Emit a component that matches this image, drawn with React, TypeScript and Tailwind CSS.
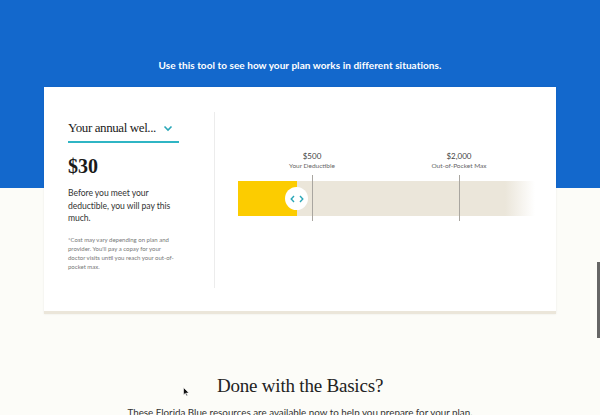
import React from "react";

export default function App() {
  const serif = { fontFamily: '"Liberation Serif", "Times New Roman", serif' };
  return (
    <div
      className="relative w-[600px] h-[415px] overflow-hidden bg-[#fcfcf8]"
      style={{ fontFamily: 'Lato, "Open Sans", sans-serif' }}
    >
      <div className="h-[188px] bg-[#1368cc] flex justify-center pt-[58px]">
        <p className="text-white text-[10px] font-bold tracking-[0.05px]">
          Use this tool to see how your plan works in different situations.
        </p>
      </div>

      <div className="mx-[44px] -mt-[101px] relative bg-white border-b-[3px] border-[#ebe6da] shadow-[0_0_2px_rgba(0,0,0,0.08)]">
        <div className="flex h-[224px] pt-[25px] pb-[23px]">
          <div className="w-[171px] border-r border-[#ececec] pl-[24px] pr-[35px]">
            <div className="flex items-center justify-between h-[29px] border-b-2 border-[#2fb5c4] pr-[6px] mt-[2px]">
              <span
                className="text-[13px] text-[#222] tracking-[-0.4px] whitespace-nowrap"
                style={serif}
              >
                Your annual wel...
              </span>
              <svg width="10" height="7" viewBox="0 0 10 7" className="mt-[1px]">
                <path d="M1.5 1.5 L5 5 L8.5 1.5" fill="none" stroke="#2aa7b8" strokeWidth="1.6" />
              </svg>
            </div>
            <div className="mt-[11px] text-[20px] font-bold text-[#1a1a1a] leading-[24px]" style={serif}>
              $30
            </div>
            <p className="mt-[9px] w-[104px] text-[8.6px] leading-[12.5px] tracking-[-0.05px] text-[#333]">
              Before you meet your deductible, you will pay this much.
            </p>
            <p className="mt-[10px] w-[110px] text-[6px] leading-[9px] text-[#777]">
              *Cost may vary depending on plan and provider. You'll pay a copay for your doctor visits until you reach your out-of-pocket max.
            </p>
          </div>

          <div className="flex-1 pl-[23px] pt-[39px]">
            <div className="relative w-[297px] h-[80px]">
              <div className="absolute left-[74px] top-0 -translate-x-1/2 flex flex-col items-center">
                <span className="text-[8px] text-[#444] leading-[10px]">$500</span>
                <span className="text-[6.5px] text-[#666] leading-[9px] whitespace-nowrap">Your Deductible</span>
              </div>
              <div className="absolute left-[221px] top-0 -translate-x-1/2 flex flex-col items-center">
                <span className="text-[8px] text-[#444] leading-[10px]">$2,000</span>
                <span className="text-[6.5px] text-[#666] leading-[9px] whitespace-nowrap">Out-of-Pocket Max</span>
              </div>
              <div
                className="absolute left-0 top-[30px] h-[35px] w-[297px]"
                style={{
                  background:
                    "linear-gradient(to right, #ebe6da 0%, #ebe6da 90%, rgba(235,230,218,0) 100%)",
                }}
              />
              <div className="absolute left-0 top-[30px] h-[35px] w-[59px] bg-[#fccc00]" />
              <div className="absolute left-[74px] top-[24px] h-[46px] w-px bg-[#a9a6a0]" />
              <div className="absolute left-[221px] top-[24px] h-[46px] w-px bg-[#a9a6a0]" />
              <div className="absolute left-[47px] top-[36px] w-[23px] h-[23px] rounded-full bg-white flex items-center justify-center gap-[4px]">
                <svg width="5" height="8" viewBox="0 0 5 8">
                  <path d="M4 1 L1.2 4 L4 7" fill="none" stroke="#2aa7b8" strokeWidth="1.4" />
                </svg>
                <svg width="5" height="8" viewBox="0 0 5 8">
                  <path d="M1 1 L3.8 4 L1 7" fill="none" stroke="#2aa7b8" strokeWidth="1.4" />
                </svg>
              </div>
            </div>
          </div>
        </div>
      </div>

      <div className="flex flex-col items-center pt-[60px]">
        <h2 className="text-[19px] text-[#222] leading-[24px] tracking-[-0.2px]" style={serif}>
          Done with the Basics?
        </h2>
        <p className="mt-[8px] text-[9.8px] leading-[12px] text-[#333]">
          These Florida Blue resources are available now to help you prepare for your plan.
        </p>
      </div>

      <svg className="absolute left-[183px] top-[387px]" width="7" height="10" viewBox="0 0 7 10">
        <path d="M0.5 0.5 L0.5 8 L2.3 6.3 L3.6 9 L4.6 8.5 L3.4 6 L6 6 Z" fill="#111" stroke="#fff" strokeWidth="0.6" />
      </svg>

      <div className="absolute right-0 top-[262px] w-[3px] h-[76px] bg-[#666]" />
    </div>
  );
}
